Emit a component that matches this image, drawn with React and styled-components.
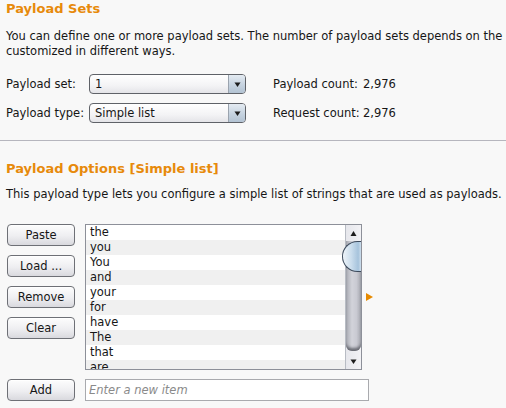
import React from "react";
import styled, { createGlobalStyle } from "styled-components";

const GlobalStyle = createGlobalStyle`
  html, body { margin: 0; padding: 0; background: #f8f8f8; }
  body {
    font-family: "DejaVu Sans", "Liberation Sans", sans-serif;
    font-size: 11.5px;
    color: #161616;
  }
`;

const Page = styled.div`
  width: 506px;
  height: 408px;
  overflow: hidden;
  background: #f8f8f8;
`;

const Section = styled.section`
  padding: ${(p) => p.$top}px 0 0 6px;
`;

const Title = styled.h2`
  margin: 0;
  font-size: 13px;
  line-height: 16px;
  font-weight: bold;
  color: #e78a0b;
`;

const Para = styled.p`
  margin: ${(p) => p.$mt}px 0 0 0;
  line-height: 15px;
  white-space: nowrap;
`;

const FormGrid = styled.div`
  display: grid;
  grid-template-columns: 83px 157px 27px 90px auto;
  grid-auto-rows: 20px;
  row-gap: 9px;
  margin-top: 15px;
  align-items: center;
`;

const Label = styled.span`
  white-space: nowrap;
`;

const Select = styled.div`
  height: 20px;
  box-sizing: border-box;
  border: 1px solid #5f6268;
  border-radius: 4px;
  display: flex;
  overflow: hidden;
  background: linear-gradient(#ffffff, #f3f3f5 60%, #e4e4e8);
`;

const SelectText = styled.span`
  flex: 1;
  padding-left: 5px;
  line-height: 18px;
`;

const SelectArrow = styled.span`
  width: 16px;
  border-left: 1px solid #9aa3ae;
  background: linear-gradient(#e4ebf2, #c6d3e0 55%, #b3c3d3);
  display: flex;
  align-items: center;
  justify-content: center;
`;

const Separator = styled.hr`
  margin: 17px 0 0 0;
  border: 0;
  border-top: 1px solid #b6b6be;
  height: 0;
`;

const Editor = styled.div`
  display: flex;
  align-items: flex-start;
  margin-top: 22px;
`;

const ButtonColumn = styled.div`
  display: flex;
  flex-direction: column;
  gap: 9px;
  margin-left: 1px;
`;

const Button = styled.button`
  width: 68px;
  height: 22px;
  box-sizing: border-box;
  padding: 0;
  border: 1px solid #6e7076;
  border-radius: 4px;
  background: linear-gradient(#fdfdfd, #eeeef1 55%, #d9d9de);
  font-family: "DejaVu Sans", "Liberation Sans", sans-serif;
  font-size: 11.5px;
  color: #161616;
  box-shadow: inset 0 1px 0 #ffffff;
`;

const ListBox = styled.div`
  margin-left: 10px;
  width: 277px;
  height: 146px;
  box-sizing: border-box;
  border: 1px solid #8d9099;
  background: #fff;
  display: flex;
  overflow: hidden;
`;

const Rows = styled.div`
  flex: 1;
  overflow: hidden;
`;

const Row = styled.div`
  height: 15px;
  line-height: 15px;
  padding-left: 4px;
  background: ${(p) => (p.$alt ? "#f0f0f0" : "#ffffff")};
`;

const Scrollbar = styled.div`
  width: 15px;
  border-left: 1px solid #b8bcc4;
  display: flex;
  flex-direction: column;
  background: linear-gradient(90deg, #e6e7ec, #f2f2f5);
  position: relative;
`;

const ScrollArrow = styled.div`
  height: 16px;
  display: flex;
  align-items: center;
  justify-content: center;
`;

const Track = styled.div`
  flex: 1;
  position: relative;
  margin: 0 0 2px 0;
  border-radius: 0 0 6px 6px;
  background: linear-gradient(90deg, #a9abb3, #d2d3da 40%, #c9cad2 70%, #a6a8b0);
  box-shadow: inset 0 -4px 3px -1px #6a6c74;
`;

const Thumb = styled.div`
  position: absolute;
  top: 0;
  left: -4px;
  right: -1px;
  height: 29px;
  border: 1px solid #3c4a5c;
  border-right: 0;
  border-radius: 16px 0 0 16px;
  background: linear-gradient(90deg, #eef4f9, #c9dcec 45%, #a6c3dc 80%, #dbe7f1);
`;

const Marker = styled.div`
  align-self: center;
  margin-left: 4px;
  width: 0;
  height: 0;
  border-top: 4.5px solid transparent;
  border-bottom: 4.5px solid transparent;
  border-left: 7px solid #e68a00;
`;

const AddRow = styled.div`
  display: flex;
  align-items: center;
  margin-top: 9px;
  margin-left: 1px;
`;

const Input = styled.input`
  margin-left: 10px;
  width: 284px;
  height: 22px;
  box-sizing: border-box;
  border: 1px solid #a9aaae;
  background: #fff;
  padding: 0 0 0 3px;
  font-family: "DejaVu Sans", "Liberation Sans", sans-serif;
  font-size: 11.5px;
  outline: none;
  &::placeholder {
    color: #8a8a8a;
    font-style: italic;
  }
`;

const Tri = ({ dir = "down", size = 7 }) => (
  <svg width={size} height={size} viewBox="0 0 7 7">
    {dir === "down" ? (
      <path d="M0.5 1.5 L6.5 1.5 L3.5 6 Z" fill="#1c1c1c" />
    ) : (
      <path d="M0.5 6 L6.5 6 L3.5 1 Z" fill="#1c1c1c" />
    )}
  </svg>
);

const words = ["the", "you", "You", "and", "your", "for", "have", "The", "that", "are"];

export default function App() {
  return (
    <Page>
      <GlobalStyle />
      <Section $top={1}>
        <Title>Payload Sets</Title>
        <Para $mt={12}>
          You can define one or more payload sets. The number of payload sets depends on the
          <br />
          customized in different ways.
        </Para>
        <FormGrid>
          <Label>Payload set:</Label>
          <Select>
            <SelectText>1</SelectText>
            <SelectArrow>
              <Tri />
            </SelectArrow>
          </Select>
          <span />
          <Label>Payload count:</Label>
          <Label>2,976</Label>
          <Label>Payload type:</Label>
          <Select>
            <SelectText>Simple list</SelectText>
            <SelectArrow>
              <Tri />
            </SelectArrow>
          </Select>
          <span />
          <Label>Request count:</Label>
          <Label>2,976</Label>
        </FormGrid>
      </Section>
      <Separator />
      <Section $top={20}>
        <Title>Payload Options [Simple list]</Title>
        <Para $mt={10}>
          This payload type lets you configure a simple list of strings that are used as payloads.
        </Para>
        <Editor>
          <ButtonColumn>
            <Button>Paste</Button>
            <Button>Load ...</Button>
            <Button>Remove</Button>
            <Button>Clear</Button>
          </ButtonColumn>
          <ListBox>
            <Rows>
              {words.map((w, i) => (
                <Row key={i} $alt={i % 2 === 1}>
                  {w}
                </Row>
              ))}
            </Rows>
            <Scrollbar>
              <ScrollArrow>
                <Tri dir="up" />
              </ScrollArrow>
              <Track>
                <Thumb />
              </Track>
              <ScrollArrow>
                <Tri />
              </ScrollArrow>
            </Scrollbar>
          </ListBox>
          <Marker />
        </Editor>
        <AddRow>
          <Button>Add</Button>
          <Input placeholder="Enter a new item" />
        </AddRow>
      </Section>
    </Page>
  );
}
